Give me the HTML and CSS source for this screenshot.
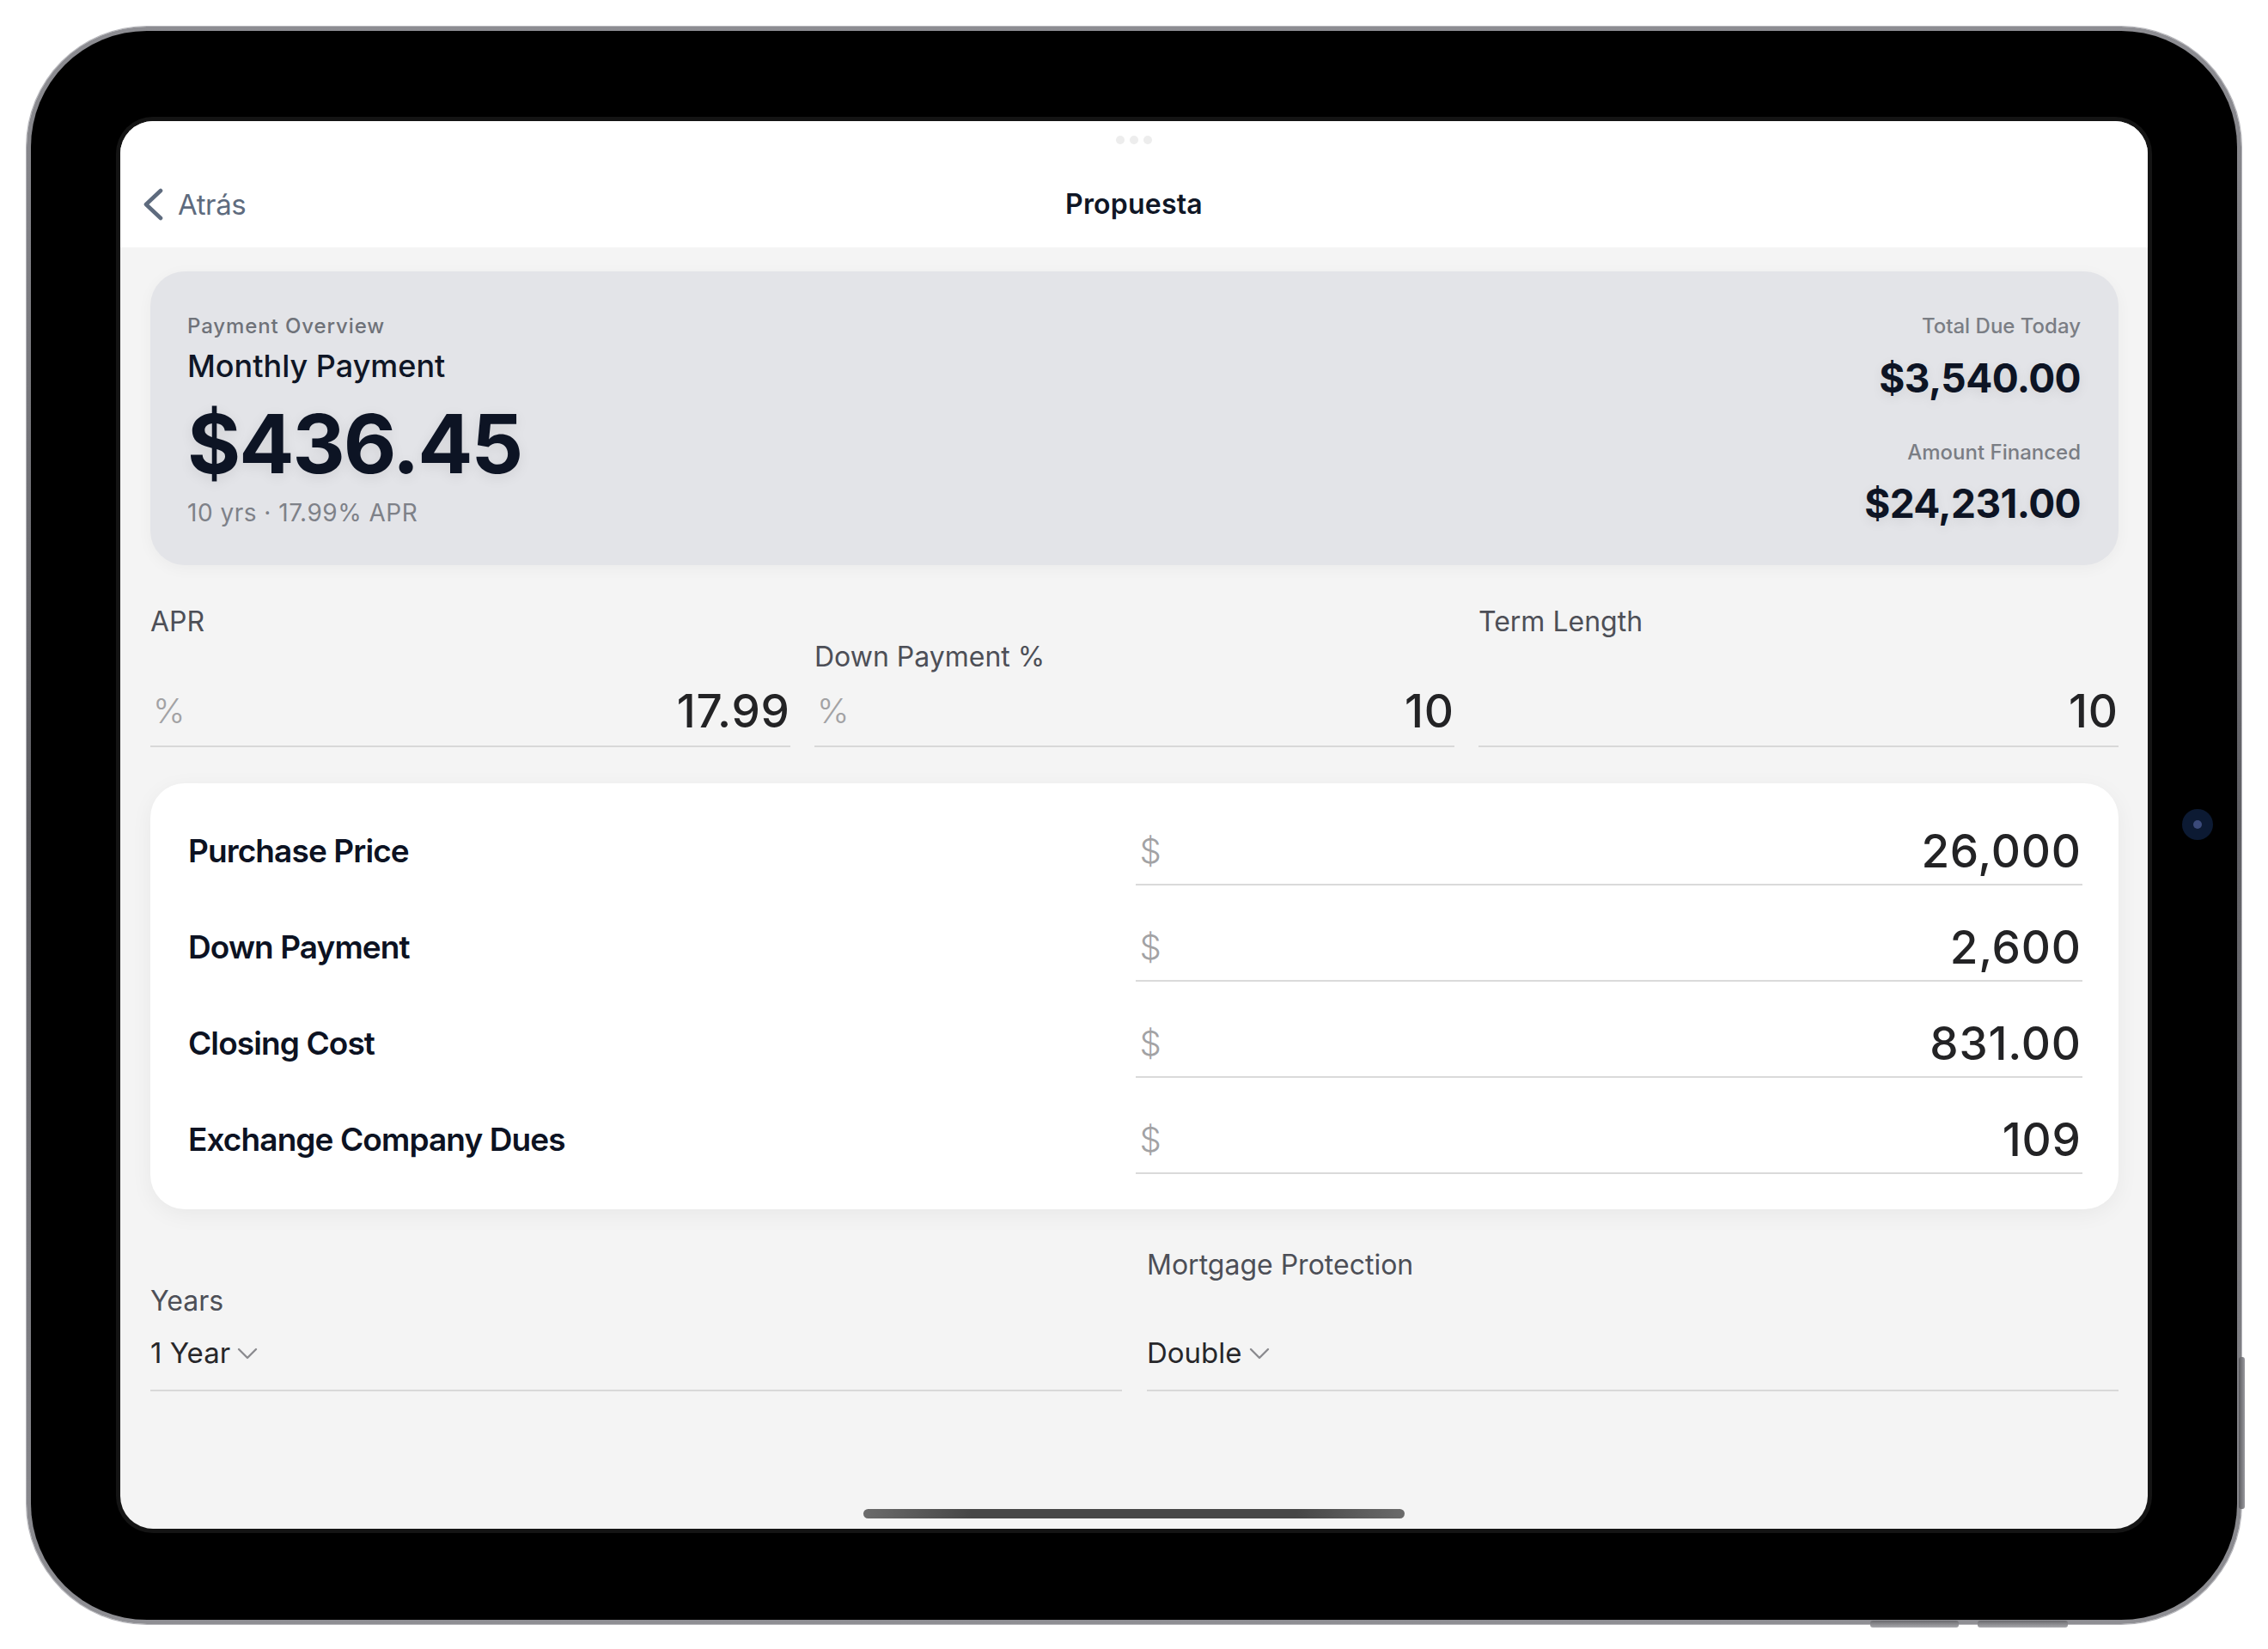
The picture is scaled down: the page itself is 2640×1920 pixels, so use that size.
FILE: index.html
```html
<!DOCTYPE html>
<html lang="es">
<head>
<meta charset="utf-8">
<title>Propuesta</title>
<link rel="stylesheet" href="styles.css">
</head>
<body>
<div class="device">
  <div class="bezel">
    <div class="screen">
      <header class="nav">
        <div class="grabber"><span></span><span></span><span></span></div>
        <div class="nav-row">
          <a class="back">
            <svg class="back-chevron" width="24" height="38" viewBox="0 0 24 38"><path d="M21 3 L4 19 L21 35" fill="none" stroke="#5e6b7e" stroke-width="4.6" stroke-linecap="round" stroke-linejoin="round"/></svg>
            <span>Atrás</span>
          </a>
          <h1 class="title">Propuesta</h1>
          <div class="nav-spacer"></div>
        </div>
      </header>

      <main class="content">
        <section class="summary">
          <div class="summary-left">
            <div class="eyebrow">Payment Overview</div>
            <div class="heading">Monthly Payment</div>
            <div class="amount-big">$436.45</div>
            <div class="summary-sub">10 yrs · 17.99% APR</div>
          </div>
          <div class="summary-right">
            <div class="stat-label">Total Due Today</div>
            <div class="stat-value">$3,540.00</div>
            <div class="stat-label second">Amount Financed</div>
            <div class="stat-value">$24,231.00</div>
          </div>
        </section>

        <section class="fields">
          <div class="field">
            <div class="field-label">APR</div>
            <div class="input"><span class="prefix">%</span><span class="value">17.99</span></div>
          </div>
          <div class="field">
            <div class="field-label tight">Down Payment %</div>
            <div class="input"><span class="prefix">%</span><span class="value">10</span></div>
          </div>
          <div class="field">
            <div class="field-label">Term Length</div>
            <div class="input"><span class="prefix"></span><span class="value">10</span></div>
          </div>
        </section>

        <section class="costs">
          <div class="cost-row">
            <div class="cost-label">Purchase Price</div>
            <div class="cost-input"><span class="prefix">$</span><span class="value">26,000</span></div>
          </div>
          <div class="cost-row">
            <div class="cost-label">Down Payment</div>
            <div class="cost-input"><span class="prefix">$</span><span class="value">2,600</span></div>
          </div>
          <div class="cost-row">
            <div class="cost-label">Closing Cost</div>
            <div class="cost-input"><span class="prefix">$</span><span class="value">831.00</span></div>
          </div>
          <div class="cost-row">
            <div class="cost-label">Exchange Company Dues</div>
            <div class="cost-input"><span class="prefix">$</span><span class="value">109</span></div>
          </div>
        </section>

        <section class="selects">
          <div class="select-field">
            <div class="select-label">Years</div>
            <div class="select">
              <span class="select-value">1 Year</span>
              <svg class="select-chevron" width="24" height="14" viewBox="0 0 24 14"><path d="M2 2 L12 12 L22 2" fill="none" stroke="#8b8b8f" stroke-width="2.4" stroke-linecap="round" stroke-linejoin="round"/></svg>
            </div>
          </div>
          <div class="select-field">
            <div class="select-label loose">Mortgage Protection</div>
            <div class="select">
              <span class="select-value">Double</span>
              <svg class="select-chevron" width="24" height="14" viewBox="0 0 24 14"><path d="M2 2 L12 12 L22 2" fill="none" stroke="#8b8b8f" stroke-width="2.4" stroke-linecap="round" stroke-linejoin="round"/></svg>
            </div>
          </div>
        </section>
      </main>

      <div class="home-indicator"></div>
    </div>
    <div class="camera"><span class="lens"></span></div>
  </div>
  <div class="side-button"></div>
  <div class="bottom-button b1"></div>
  <div class="bottom-button b2"></div>
</div>
</body>
</html>
```

FILE: styles.css
```css
* {
  box-sizing: border-box;
}

html, body {
  margin: 0;
  padding: 0;
  background: #ffffff;
}

body {
  width: 2640px;
  height: 1920px;
  padding: 31px 0 0 31px;
  font-family: "Inter", "Noto Sans", "Liberation Sans", sans-serif;
  overflow: hidden;
}

/* ---------- device frame ---------- */
.device {
  position: relative;
  width: 2578px;
  height: 1860px;
  border-radius: 140px;
  padding: 5px;
  background: linear-gradient(180deg, #8d8d92 0%, #5f5f64 50%, #8f8f94 100%);
  box-shadow: 0 0 0 1px #b5b5ba;
}

.bezel {
  position: relative;
  width: 100%;
  height: 100%;
  border-radius: 135px;
  background: #000000;
  padding: 105px 104px 106px 104px;
}

.screen {
  position: relative;
  width: 100%;
  height: 100%;
  border-radius: 38px;
  overflow: hidden;
  background: #f4f4f4;
  display: flex;
  flex-direction: column;
  box-shadow: 0 0 0 5px #141414;
}

.camera {
  position: absolute;
  left: 2504px;
  top: 906px;
  width: 36px;
  height: 36px;
  border-radius: 50%;
  background: #0c1a33;
  display: flex;
  align-items: center;
  justify-content: center;
}

.lens {
  width: 10px;
  height: 10px;
  border-radius: 50%;
  background: #3b4a7a;
}

.side-button {
  position: absolute;
  left: 2575px;
  top: 1549px;
  width: 7px;
  height: 177px;
  border-radius: 3px;
  background: linear-gradient(90deg, #5a5a5e, #9a9a9f);
}

.bottom-button {
  position: absolute;
  top: 1856px;
  height: 8px;
  border-radius: 3px;
  background: linear-gradient(180deg, #6a6a6e, #a9a9ad);
}

.bottom-button.b1 {
  left: 2146px;
  width: 103px;
}

.bottom-button.b2 {
  left: 2271px;
  width: 105px;
}

/* ---------- nav ---------- */
.nav {
  height: 147px;
  flex: none;
  background: #ffffff;
  padding-top: 17px;
}

.grabber {
  display: flex;
  justify-content: center;
  gap: 6px;
  height: 10px;
}

.grabber span {
  width: 10px;
  height: 10px;
  border-radius: 50%;
  background: #ededed;
}

.nav-row {
  margin-top: 50px;
  display: grid;
  grid-template-columns: 1fr auto 1fr;
  align-items: center;
  height: 40px;
}

.back {
  display: flex;
  align-items: center;
  gap: 17px;
  padding-left: 26px;
  color: #5e6b7e;
  font-size: 33px;
  line-height: 40px;
  letter-spacing: -0.4px;
}

.back-chevron {
  flex: none;
}

.title {
  margin: 0;
  font-size: 32px;
  line-height: 40px;
  font-weight: 600;
  color: #0f1626;
  text-align: center;
  letter-spacing: 0.2px;
}

/* ---------- content ---------- */
.content {
  flex: 1;
  padding: 28px 34px 0 35px;
}

.summary {
  display: flex;
  justify-content: space-between;
  background: #e3e4e8;
  border-radius: 40px;
  padding: 49px 44px 44px 43px;
  box-shadow: 0 4px 18px rgba(0, 0, 0, 0.04);
}

.eyebrow {
  font-size: 24px;
  line-height: 30px;
  font-weight: 500;
  color: #6f7279;
  letter-spacing: 0.9px;
}

.heading {
  margin-top: 9px;
  font-size: 36px;
  line-height: 44px;
  font-weight: 500;
  color: #0f1626;
}

.amount-big {
  margin-top: 14px;
  font-size: 95px;
  line-height: 110px;
  font-weight: 700;
  color: #0d1424;
  letter-spacing: -2px;
  text-shadow: 0 4px 16px rgba(0, 0, 0, 0.08);
}

.summary-sub {
  margin-top: 8px;
  font-size: 28px;
  line-height: 34px;
  color: #7e8188;
  letter-spacing: 0.5px;
}

.summary-right {
  text-align: right;
}

.stat-label {
  font-size: 24px;
  line-height: 30px;
  font-weight: 500;
  color: #7a7d84;
}

.stat-label.second {
  margin-top: 44px;
}

.stat-value {
  margin-top: 17px;
  font-size: 46px;
  line-height: 56px;
  font-weight: 700;
  color: #0d1424;
  letter-spacing: -0.6px;
  text-shadow: 0 4px 14px rgba(0, 0, 0, 0.08);
}

.stat-label.second + .stat-value {
  margin-top: 16px;
}

/* ---------- fields ---------- */
.fields {
  margin-top: 46px;
  display: grid;
  grid-template-columns: repeat(3, 1fr);
  column-gap: 28px;
  align-items: end;
}

.field-label {
  font-size: 32px;
  line-height: 40px;
  color: #4d4f57;
  margin-bottom: 52px;
}

.field-label.tight {
  margin-bottom: 11px;
}

.input {
  display: flex;
  align-items: center;
  justify-content: space-between;
  padding: 0 1px 8px 3px;
  border-bottom: 2px solid #d8d8d8;
}

.prefix {
  font-size: 40px;
  line-height: 64px;
  font-weight: 300;
  color: #a2a2a4;
}

.value {
  font-size: 53px;
  line-height: 64px;
  font-weight: 500;
  color: #232325;
  letter-spacing: 0.8px;
  margin-right: -0.8px;
}

/* ---------- costs card ---------- */
.costs {
  margin-top: 42px;
  background: #ffffff;
  border-radius: 40px;
  padding: 7px 42px 41px 44px;
  box-shadow: 0 6px 26px rgba(0, 0, 0, 0.05);
}

.cost-row {
  display: grid;
  grid-template-columns: 1fr 1fr;
  align-items: end;
}

.cost-label {
  font-size: 37px;
  line-height: 64px;
  font-weight: 600;
  color: #0c1222;
  padding-bottom: 8px;
  letter-spacing: -0.9px;
}

.cost-input {
  display: flex;
  align-items: center;
  justify-content: space-between;
  padding: 40px 2px 6px 5px;
  border-bottom: 2px solid #dadada;
}

/* ---------- selects ---------- */
.selects {
  margin-top: 45px;
  display: grid;
  grid-template-columns: 1fr 1fr;
  column-gap: 29px;
  align-items: end;
}

.select-label {
  font-size: 32px;
  line-height: 40px;
  color: #4d4f57;
  margin-bottom: 20px;
}

.select-label.loose {
  margin-bottom: 62px;
}

.select {
  display: flex;
  align-items: center;
  gap: 8px;
  padding-bottom: 23px;
  border-bottom: 2px solid #d8d8d8;
}

.select-value {
  font-size: 33px;
  line-height: 40px;
  color: #27272a;
}

.select-chevron {
  flex: none;
  margin-top: 2px;
}

.home-indicator {
  position: absolute;
  left: 50%;
  bottom: 12px;
  width: 630px;
  height: 11px;
  margin-left: -315px;
  border-radius: 6px;
  background: linear-gradient(90deg, #6b6b6b 0%, #474747 20%, #474747 80%, #6b6b6b 100%);
}
```
